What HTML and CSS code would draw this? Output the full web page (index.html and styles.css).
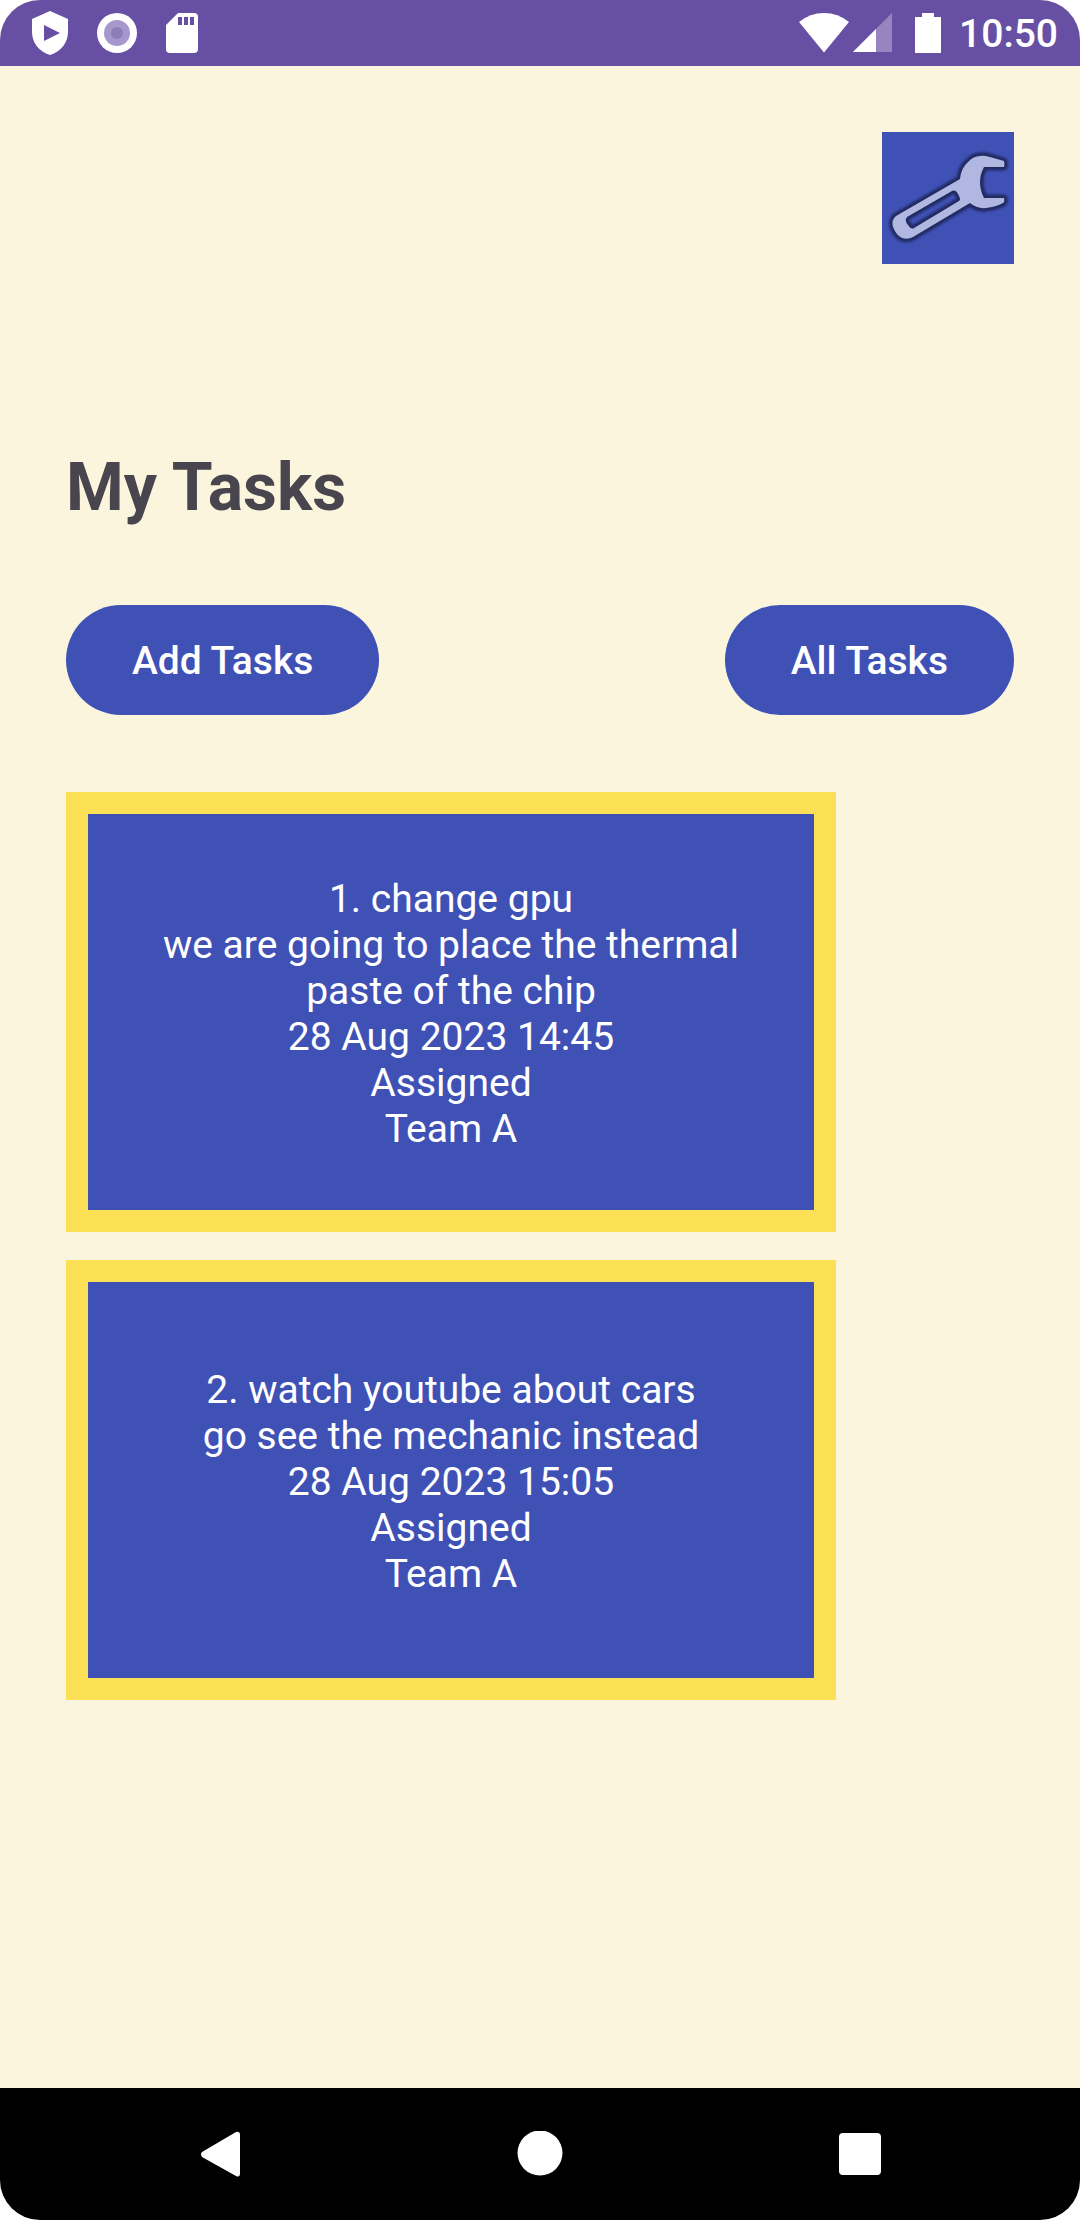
FILE: index.html
```html
<!DOCTYPE html>
<html lang="en">
<head>
  <meta charset="utf-8">
  <meta name="viewport" content="width=device-width, initial-scale=1">
  <title>My Tasks</title>
  <link rel="stylesheet" href="styles.css">
</head>
<body>
  <div class="screen">
    <header class="status-bar">
      <div class="status-group notifications">
        <svg width="36" height="44" viewBox="0 0 36 44" aria-hidden="true">
          <path fill="#fff" fill-rule="evenodd" d="M18 0 36 8V21C36 31 29 41 18 44 7 41 0 31 0 21V8ZM12 14V30L28 22Z"/>
        </svg>
        <svg width="40" height="40" viewBox="0 0 40 40" aria-hidden="true">
          <circle cx="20" cy="20" r="20" fill="#fff"/>
          <circle cx="20" cy="20" r="13" fill="#a698cc"/>
          <circle cx="20" cy="20" r="6" fill="#8f7dba"/>
        </svg>
        <svg width="32" height="40" viewBox="0 0 32 40" aria-hidden="true">
          <path fill="#fff" fill-rule="evenodd" d="M12 0H28Q32 0 32 4V36Q32 40 28 40H4Q0 40 0 36V12ZM12 4V12H16V4ZM18 4V12H22V4ZM24 4V12H28V4Z"/>
        </svg>
      </div>
      <div class="status-group">
        <svg width="50" height="40" viewBox="0 0 50 40" aria-hidden="true">
          <path fill="#fff" d="M0 9Q11 0 25 0T50 9L25 39.500Z"/>
        </svg>
        <svg class="signal" width="40" height="40" viewBox="0 0 40 40" aria-hidden="true">
          <path fill="#9685bf" d="M39 0V39H0Z"/>
          <path fill="#fff" d="M23 16V39H0Z"/>
        </svg>
        <svg class="battery" width="26" height="40" viewBox="0 0 26 40" aria-hidden="true">
          <path fill="#fff" d="M7 0H19V4H26V40H0V4H7Z"/>
        </svg>
        <time class="clock">10:50</time>
      </div>
    </header>

    <main class="content">
      <button class="settings" type="button" aria-label="Settings">
        <svg class="wrench" viewBox="0 0 132 132" aria-hidden="true">
          <defs>
            <path id="wrench-shape" fill-rule="evenodd" d="M122 29 108 25Q94 21 86 30 79 36 78 47L14 84Q9 88 11 95 14 103 20 106 26 108 31 105L88 71Q95 77 104 76 114 75 121 71 123 70 122 66H102Q94 50 102 35H122Q123 32 122 29ZM25 85 70 59Q74 57 77 64 79 68 77 69L32 96Q29 98 26 93 22 88 25 85Z"/>
            <filter id="soften"><feGaussianBlur stdDeviation="1"/></filter>
          </defs>
          <use href="#wrench-shape" fill="#242c62" stroke="#242c62" stroke-width="7" stroke-linejoin="round" filter="url(#soften)"/>
          <use href="#wrench-shape" fill="#b0b7e0"/>
        </svg>
      </button>

      <h1 class="title">My Tasks</h1>

      <div class="actions">
        <button class="pill" type="button">Add Tasks</button>
        <button class="pill" type="button">All Tasks</button>
      </div>

      <ul class="tasks">
        <li class="task">
          <p>1. change gpu</p>
          <p>we are going to place the thermal paste of the chip</p>
          <p>28 Aug 2023 14:45</p>
          <p>Assigned</p>
          <p>Team A</p>
        </li>
        <li class="task">
          <p>2. watch youtube about cars</p>
          <p>go see the mechanic instead</p>
          <p>28 Aug 2023 15:05</p>
          <p>Assigned</p>
          <p>Team A</p>
        </li>
      </ul>
    </main>

    <nav class="nav-bar" aria-label="System">
      <button class="nav-button" type="button" aria-label="Back">
        <svg width="46" height="46" viewBox="0 0 46 46" aria-hidden="true">
          <path fill="#fff" d="M5 21 39 1Q43 0 43 4V42Q43 47 39 45L5 26Q3 23 5 21Z"/>
        </svg>
      </button>
      <button class="nav-button" type="button" aria-label="Home">
        <svg width="46" height="46" viewBox="0 0 46 46" aria-hidden="true">
          <circle cx="23" cy="22" r="22.500" fill="#fff"/>
        </svg>
      </button>
      <button class="nav-button" type="button" aria-label="Overview">
        <svg width="46" height="46" viewBox="0 0 46 46" aria-hidden="true">
          <rect x="2" y="2" width="42" height="42" rx="4" fill="#fff"/>
        </svg>
      </button>
    </nav>
  </div>
</body>
</html>
```
FILE: styles.css
```css
* {
  box-sizing: border-box;
}

body {
  margin: 0;
  background: #fff;
  font-family: Roboto, "Liberation Sans", sans-serif;
}

button {
  border: 0;
  font: inherit;
  color: inherit;
}

svg {
  display: block;
}

.screen {
  display: flex;
  flex-direction: column;
  min-height: 100vh;
  overflow: hidden;
  border-radius: 40px;
  background: #fcf5de;
}

.status-bar {
  display: flex;
  justify-content: space-between;
  align-items: center;
  height: 66px;
  padding: 0 22px 0 32px;
  background: #6750a3;
  color: #fff;
}

.status-group {
  display: flex;
  align-items: center;
}

.notifications {
  gap: 29px;
}

.signal {
  margin-left: 4px;
}

.battery {
  margin-left: 22px;
}

.clock {
  margin-left: 18px;
  padding-top: 2px;
  font-size: 39px;
  font-weight: 500;
  line-height: 46px;
}

.content {
  flex: 1;
  display: flex;
  flex-direction: column;
  padding: 66px;
}

.settings {
  align-self: flex-end;
  width: 132px;
  height: 132px;
  padding: 0;
  background: #3f51b5;
}

.title {
  margin: 185px 0 0;
  color: #49454f;
  font-size: 66px;
  font-weight: 700;
  line-height: 78px;
}

.actions {
  display: flex;
  justify-content: space-between;
  margin-top: 78px;
}

.pill {
  height: 110px;
  padding: 2px 66px 0;
  border-radius: 55px;
  background: #3f51b5;
  color: #fff;
  font-size: 39px;
  font-weight: 500;
  line-height: 46px;
}

.tasks {
  display: flex;
  flex-direction: column;
  gap: 28px;
  max-width: 770px;
  margin: 77px 0 0;
  padding: 0;
  list-style: none;
}

.task {
  display: flex;
  flex-direction: column;
  justify-content: center;
  min-height: 440px;
  padding: 46px 44px 42px;
  border: 22px solid #fbdf54;
  background: #3f51b5;
  color: #fff;
  font-size: 39px;
  line-height: 46px;
  text-align: center;
}

.task p {
  margin: 0;
}

.nav-bar {
  display: grid;
  grid-template-columns: repeat(3, 1fr);
  height: 132px;
  padding: 0 60px;
  background: #000;
}

.nav-button {
  display: flex;
  justify-content: center;
  align-items: center;
  padding: 0;
  background: none;
}
```
